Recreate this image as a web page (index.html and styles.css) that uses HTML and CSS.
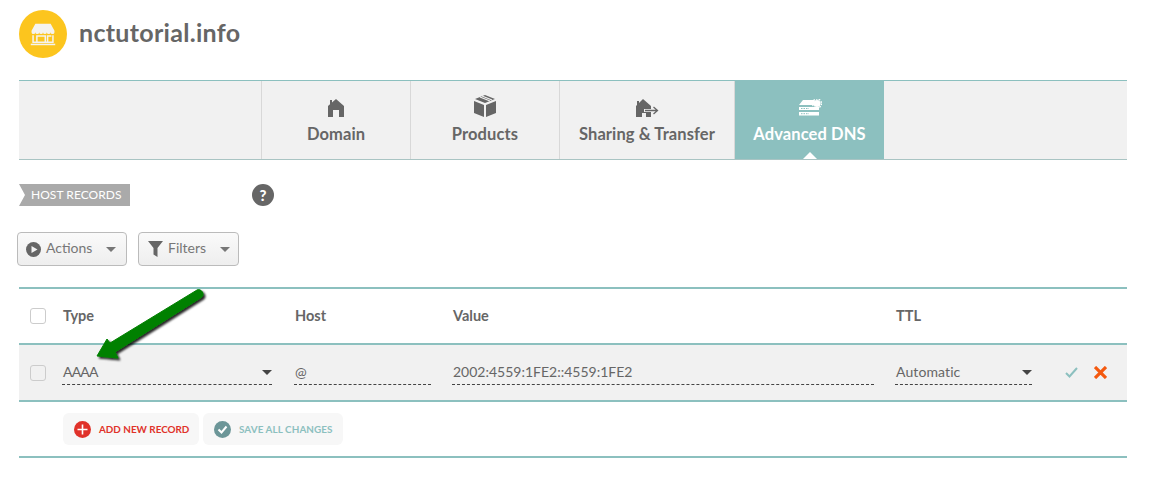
FILE: index.html
```html
<!DOCTYPE html>
<html lang="en">
<head>
<meta charset="utf-8">
<title>nctutorial.info</title>
<link rel="stylesheet" href="styles.css">
</head>
<body>
<div class="page">
  <header class="head">
    <span class="logo">
      <svg width="26" height="23" viewBox="0 0 34 30"><path fill="#f5f3ee" d="M7 1h20l5 9v2a2.500 2.500 0 0 1-5 0 2.500 2.500 0 0 1-5 0 2.500 2.500 0 0 1-5 0 2.500 2.500 0 0 1-5 0 2.500 2.500 0 0 1-5 0 2.500 2.500 0 0 1-5 0v-2z"/><path fill="none" stroke="#f5f3ee" stroke-width="2" d="M4 16v9h26v-9M9 25v-8h11v8M23 25v-8h5"/><rect x="1" y="27" width="32" height="2" fill="#f5f3ee"/></svg>
    </span>
    <h1 class="domain">nctutorial.info</h1>
  </header>

  <nav class="tabs">
    <div class="tab-spacer"></div>
    <a class="tab tab-w149">
      <svg class="ico" width="16" height="18" viewBox="0 0 16 18"><path fill="#666" d="M8 0l8 7v11h-5v-7H5v7H0V7l2-1.800V1h2v2.500z"/></svg>
      <span>Domain</span>
    </a>
    <a class="tab tab-w149">
      <svg class="ico" width="22" height="22" viewBox="0 0 22 22"><path fill="#666" d="M11 0l10 4-10 4L1 4zM0 6l10 4v12L0 18zM22 6v12l-10 4V10z"/><path stroke="#f1f1f1" stroke-width="1.300" d="M6 2l10 4M8 1l10 4"/></svg>
      <span>Products</span>
    </a>
    <a class="tab tab-w175">
      <svg class="ico" width="24" height="18" viewBox="0 0 24 18"><path fill="#666" d="M8 0l8 7v3h-7v3h7v5h-5v-4H7v4H1V7l1-1V2h2v2z"/><path fill="none" stroke="#666" stroke-width="1.300" d="M10 11.500h12M18.500 8l4 3.500-4 3.500"/></svg>
      <span>Sharing &amp; Transfer</span>
    </a>
    <a class="tab tab-w149 tab-active">
      <svg class="ico" width="24" height="18" viewBox="0 0 24 18"><path fill="#fff" d="M5 1h11l2 5H1zM1 8h20v3H1zM1 13h20v3.500H1z"/><circle cx="19" cy="4.500" r="3.500" fill="#fff"/><circle cx="19" cy="4.500" r="4.500" fill="none" stroke="#fff" stroke-width="1.400" stroke-dasharray="1.600 1.200"/><path stroke="#8cc0bf" stroke-dasharray="1.500 1" d="M3 9.500h8M3 14.700h8"/></svg>
      <span>Advanced DNS</span>
    </a>
  </nav>

  <section class="section-head">
    <span class="flag">HOST RECORDS</span>
    <span class="help">?</span>
  </section>

  <div class="toolbar">
    <button class="btn btn-actions">
      <svg width="15" height="15" viewBox="0 0 15 15"><circle cx="7.500" cy="7.500" r="7.500" fill="#666"/><path fill="#f3f3f3" d="M5.500 4l6 3.500-6 3.500z"/></svg>
      <span class="btn-label">Actions</span><i class="caret caret-grey"></i>
    </button>
    <button class="btn btn-filters">
      <svg width="15" height="16" viewBox="0 0 15 16"><path fill="#666" d="M0 0h15L9.500 7v9l-4-2.500V7z"/></svg>
      <span class="btn-label">Filters</span><i class="caret caret-grey"></i>
    </button>
  </div>

  <div class="table">
    <div class="row row-head">
      <span class="check"></span>
      <span class="col">Type</span>
      <span class="col">Host</span>
      <span class="col">Value</span>
      <span class="col">TTL</span>
    </div>
    <div class="row row-edit">
      <span class="check"></span>
      <span class="field field-type">AAAA<i class="caret"></i></span>
      <span class="field field-host">@</span>
      <span class="field field-value">2002:4559:1FE2::4559:1FE2</span>
      <span class="ttl">
        <span class="field field-ttl">Automatic<i class="caret"></i></span>
        <svg class="ok" width="13" height="11" viewBox="0 0 13 11"><path fill="none" stroke="#8cc0bf" stroke-width="2" d="M1 6l3.500 3.500L12 1"/></svg>
        <svg class="no" width="13" height="13" viewBox="0 0 13 13"><path fill="none" stroke="#f4590f" stroke-width="3.200" d="M1 1l11 11M12 1L1 12"/></svg>
      </span>
    </div>
    <div class="footer">
      <button class="pill pill-add">
        <svg width="17" height="17" viewBox="0 0 17 17"><circle cx="8.500" cy="8.500" r="8.500" fill="#e0322a"/><path stroke="#fff" stroke-width="1.600" d="M8.500 3.500v10M3.500 8.500h10"/></svg>
        <span>ADD NEW RECORD</span>
      </button>
      <button class="pill pill-save">
        <svg width="17" height="17" viewBox="0 0 17 17"><circle cx="8.500" cy="8.500" r="8.500" fill="#6c9698"/><path fill="none" stroke="#fff" stroke-width="2" d="M4.500 8.500l3 3 5-6"/></svg>
        <span>SAVE ALL CHANGES</span>
      </button>
    </div>
  </div>

  <svg class="arrow" width="130" height="90" viewBox="0 0 130 90">
    <defs><filter id="sh" x="-20%" y="-20%" width="150%" height="150%"><feDropShadow dx="2" dy="2" stdDeviation="1.200" flood-color="#000" flood-opacity=".85"/></filter></defs>
    <path filter="url(#sh)" fill="#008000" stroke="#008000" stroke-width="1" stroke-linejoin="round" d="M6 71l21 2-3-6 87-55c3-3-1-9-5-7L19 58l-3-4z"/>
  </svg>
</div>
</body>
</html>
```
FILE: styles.css
```css
* { box-sizing: border-box; }
html, body { margin: 0; padding: 0; background: #fff; }
body { font-family: Lato, "Open Sans", sans-serif; color: #666; }
.page { position: relative; width: 1170px; height: 480px; padding: 10px 43px 0 19px; overflow: hidden; }

.head { display: flex; align-items: center; height: 48px; gap: 12px; }
.logo { width: 48px; height: 48px; border-radius: 50%; background: #fcc51e; display: flex; align-items: center; justify-content: center; }
.domain { margin: 0; font-size: 25px; font-weight: 700; letter-spacing: .3px; color: #666; position: relative; top: -2px; }

.tabs { display: flex; height: 80px; margin-top: 22px; background: #f1f1f1; border-top: 1px solid #8cc0bf; border-bottom: 1px solid #a9c4c3; }
.tab-spacer { width: 243px; border-right: 1px solid #d8d8d8; }
.tab { position: relative; display: flex; flex-direction: column; align-items: center; justify-content: flex-end; padding-bottom: 15px; border-right: 1px solid #d8d8d8; font-size: 16.500px; font-weight: 700; letter-spacing: .1px; color: #666; }
.tab-w149 { width: 149px; }
.tab-w175 { width: 175px; }
.ico { margin-bottom: 7px; }
.tab-active { background: #8cc0bf; color: #fff; border-right: 0; }
.tab-active::after { content: ""; position: absolute; left: 50%; bottom: 0; margin-left: -7px; border: 7px solid transparent; border-top: 0; border-bottom-color: #fff; }

.section-head { display: flex; align-items: center; height: 22px; margin-top: 24px; }
.flag { width: 111px; height: 22px; line-height: 22px; padding-left: 12px; background: #aaa; color: #fff; font-size: 12px; letter-spacing: .05px; clip-path: polygon(0 0, 100% 0, 100% 100%, 0 100%, 6px 50%); }
.help { width: 22px; height: 22px; margin-left: 122px; border-radius: 50%; background: #666; color: #fff; font-size: 15px; font-weight: 900; line-height: 22px; text-align: center; }

.toolbar { display: flex; gap: 11px; margin: 26px 0 0 -2px; }
.btn { display: flex; align-items: center; height: 34px; padding: 0 0 0 8px; gap: 5px; border: 1px solid #bbb; border-radius: 4px; background: linear-gradient(#fafafa, #eee); font: 14px Lato, sans-serif; color: #777; }
.btn-label { position: relative; top: -1.500px; }
.btn-actions { width: 110px; }
.btn-filters { width: 101px; padding-left: 9px; }
.caret { display: inline-block; border: 5.500px solid transparent; border-bottom: 0; border-top: 5px solid #444; position: relative; top: 1px; }
.caret-grey { border-top-color: #777; margin-left: 9px; top: 0; }

.table { margin-top: 21px; border-top: 2px solid #8cc0bf; }
.row { display: grid; grid-template-columns: 43px 232px 158px 443px 1fr; align-items: center; font-size: 14px; }
.col { position: relative; left: 1px; top: -1px; font-size: 14.500px; }
.row-head { height: 54px; font-weight: 700; color: #666; }
.row-edit { height: 59px; background: #f1f1f1; border-top: 2px solid #8cc0bf; border-bottom: 2px solid #8cc0bf; }
.check { width: 16px; height: 16px; margin-left: 11px; border: 1px solid #ccc; border-radius: 3px; background: #fff; }
.row-edit .check { background: #f1f1f1; }
.field { display: flex; justify-content: space-between; align-items: center; height: 24px; padding: 0 0 2px 1px; border-bottom: 1px dashed #444; color: #666; font-size: 14px; }
.field-type { width: 210px; letter-spacing: -.8px; }
.field-host { width: 137px; }
.field-value { width: 422px; }
.ttl { display: flex; align-items: center; }
.field-ttl { width: 137px; letter-spacing: .1px; }
.ok { margin-left: 33px; }
.no { margin-left: 16px; }

.footer { display: flex; gap: 4px; height: 56px; padding: 11px 0 0 44px; border-bottom: 2px solid #8cc0bf; }
.pill { display: flex; align-items: center; height: 32px; border: 0; border-radius: 6px; background: #f7f7f7; gap: 8px; padding: 0 0 0 11px; font: 700 9.900px Lato, sans-serif; }
.pill-add { width: 136px; color: #e0322a; }
.pill-save { width: 140px; color: #8cc0bf; letter-spacing: .08px; }

.arrow { position: absolute; left: 91px; top: 285px; }
```
